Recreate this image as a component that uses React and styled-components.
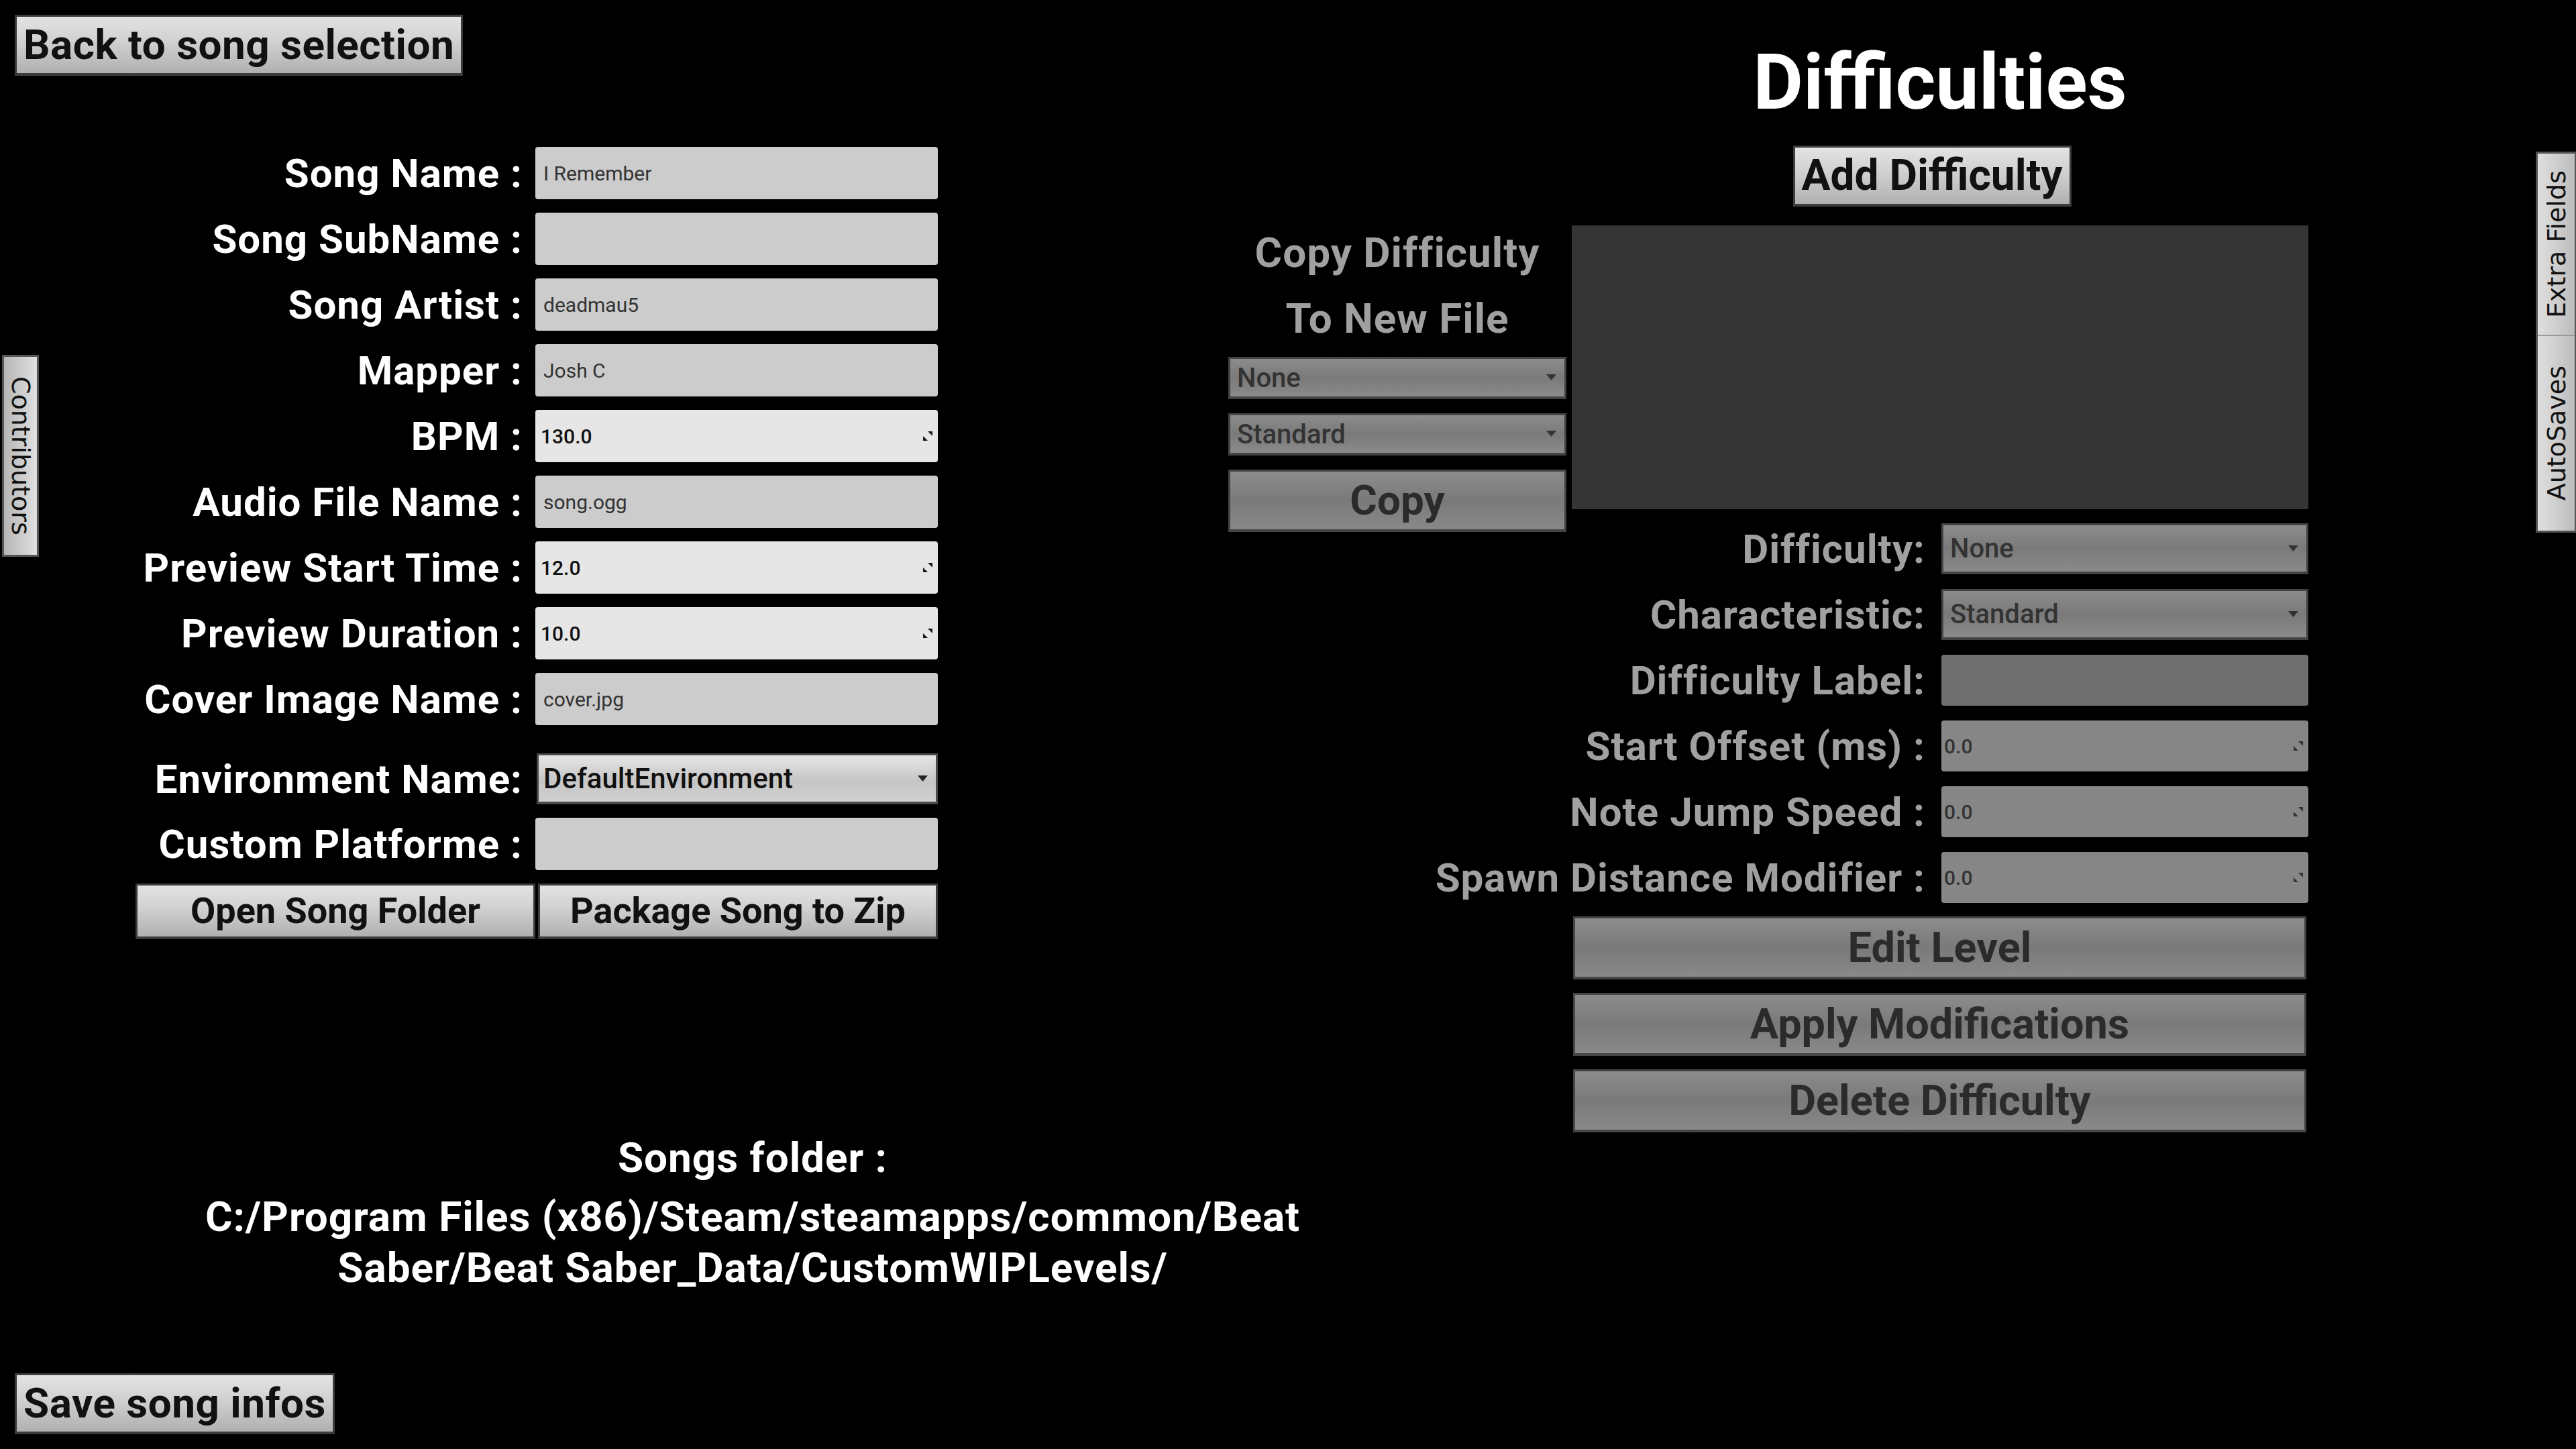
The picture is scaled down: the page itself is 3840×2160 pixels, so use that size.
import React from 'react';
import styled, { createGlobalStyle, css } from 'styled-components';

const GlobalStyle = createGlobalStyle`
  html, body {
    margin: 0;
    padding: 0;
    background: #000;
  }
  body {
    font-family: Roboto, "Liberation Sans", sans-serif;
  }
  * {
    box-sizing: border-box;
  }
`;

const Screen = styled.div`
  position: relative;
  width: 3840px;
  height: 2160px;
  overflow: hidden;
  background: #000;
  display: grid;
  grid-template-columns: 1831px 1610px 1fr;
`;

/* ---------- shared controls ---------- */

const buttonTones = {
  light: css`
    color: #111;
    background: linear-gradient(#e3e3e3, #d0d0d0 45%, #b0b0b0);
    border-color: #3c3c3c;
  `,
  dim: css`
    color: #2b2b2b;
    background: linear-gradient(#8c8c8c, #7a7a7a 50%, #898989);
    border-color: #454545;
  `,
};

const Button = styled.button`
  height: ${p => p.$h}px;
  padding: 0 10px;
  border: 3px solid;
  border-bottom-width: 4px;
  font-family: Roboto, sans-serif;
  font-weight: 700;
  font-size: ${p => p.$fs}px;
  letter-spacing: ${p => p.$ls || 0}px;
  line-height: 1;
  white-space: nowrap;
  ${p => buttonTones[p.$tone || 'light']}
`;

const fieldTones = {
  text: css`
    background: #cccccc;
    color: #333;
    font-weight: 400;
  `,
  number: css`
    background: #e6e6e6;
    color: #111;
    font-weight: 500;
  `,
  dimText: css`
    background: #6f6f6f;
    color: #333;
  `,
  dimNumber: css`
    background: #868686;
    color: #333;
    font-weight: 500;
  `,
};

const Field = styled.div`
  height: ${p => p.$h}px;
  display: flex;
  align-items: center;
  justify-content: space-between;
  padding: 0 6px 0 ${p => p.$pl}px;
  border-radius: 4px;
  font-size: 30px;
  white-space: nowrap;
  ${p => fieldTones[p.$tone]}
`;

const dropTones = {
  light: css`
    background: linear-gradient(#e6e6e6, #c6c6c6 55%, #d0d0d0);
    border-color: #4a4a4a;
    color: #111;
  `,
  dim: css`
    background: linear-gradient(#8c8c8c, #7a7a7a 50%, #8a8a8a);
    border-color: #444;
    color: #333;
  `,
};

const Dropdown = styled.div`
  height: ${p => p.$h}px;
  display: flex;
  align-items: center;
  justify-content: space-between;
  padding: 0 12px 0 ${p => p.$pl}px;
  border: 3px solid;
  border-bottom-width: 4px;
  font-size: ${p => p.$fs || 40}px;
  font-weight: 500;
  white-space: nowrap;
  ${p => dropTones[p.$tone]}
`;

const Label = styled.span`
  text-align: right;
  font-size: 60px;
  font-weight: 700;
  letter-spacing: 1px;
  white-space: nowrap;
  color: ${p => (p.$dim ? '#a0a0a0' : '#fff')};
`;

const FieldRow = styled.div`
  display: grid;
  grid-template-columns: ${p => p.$label}px ${p => p.$field}px;
  column-gap: ${p => p.$gap}px;
  align-items: center;
  margin-top: ${p => p.$push || 0}px;
`;

const SpinIcon = ({ color = '#1a1a1a' }) => (
  <svg width="18" height="18" viewBox="0 0 18 18">
    <path d="M9 2 L16 2 L16 9 Z" fill={color} />
    <path d="M2 9 L2 16 L9 16 Z" fill={color} />
  </svg>
);

const Caret = ({ color = '#222' }) => (
  <svg width="15" height="10" viewBox="0 0 15 10">
    <path d="M0 0 L15 0 L7.5 9 Z" fill={color} />
  </svg>
);

/* ---------- left pane ---------- */

const LeftPane = styled.div`
  display: flex;
  flex-direction: column;
  align-items: flex-start;
  padding: 22px;
`;

const SongForm = styled.div`
  margin: 106px 0 0 178px;
  width: 1198px;
  display: flex;
  flex-direction: column;
  gap: 20px;
`;

const FolderButtons = styled.div`
  display: grid;
  grid-template-columns: 596px 596px;
  column-gap: 4px;
  margin-left: 2px;
`;

const FolderInfo = styled.div`
  margin: 289px 0 0 250px;
  width: 1700px;
  text-align: center;
  color: #fff;
  font-weight: 700;
  font-size: 62px;
  letter-spacing: 1px;
  line-height: 73px;
`;

const FolderPath = styled.div`
  margin-top: 14px;
  line-height: 76px;
`;

const SaveButton = styled(Button)`
  margin-top: auto;
`;

/* ---------- right pane ---------- */

const RightPane = styled.div`
  display: grid;
  grid-template-columns: 504px 1098px;
  column-gap: 8px;
  align-content: start;
  padding-top: 58px;
`;

const Title = styled.h1`
  grid-column: 2;
  margin: 0;
  text-align: center;
  font-size: 115px;
  line-height: 130px;
  font-weight: 700;
  color: #fff;
`;

const AddButton = styled(Button)`
  grid-column: 2;
  justify-self: center;
  margin: 29px 24px 0 0;
`;

const CopyColumn = styled.div`
  grid-column: 1;
  grid-row: 3 / span 2;
  align-self: start;
  margin-top: 20px;
  display: flex;
  flex-direction: column;
  gap: 21px;
`;

const CopyCaption = styled.div`
  margin-bottom: -13px;
  text-align: center;
  color: #a0a0a0;
  font-size: 62px;
  font-weight: 700;
  letter-spacing: 1px;
  line-height: 98px;
`;

const DifficultyList = styled.div`
  grid-column: 2;
  grid-row: 3;
  margin-top: 28px;
  height: 423px;
  background: #353535;
`;

const DifficultyForm = styled.div`
  grid-column: 1 / -1;
  grid-row: 4;
  margin-top: 21px;
  display: flex;
  flex-direction: column;
  gap: 22px;
`;

const Actions = styled.div`
  grid-column: 2;
  grid-row: 5;
  margin: 20px 3px 0 2px;
  display: flex;
  flex-direction: column;
  gap: 20px;
`;

/* ---------- side tabs ---------- */

const TabText = styled.span`
  writing-mode: vertical-rl;
  font-family: "DejaVu Sans", sans-serif;
  font-size: 38px;
  color: #111;
  ${p => p.$up && 'transform: rotate(180deg);'}
`;

const LeftTab = styled.div`
  position: absolute;
  left: 3px;
  top: 529px;
  width: 55px;
  height: 301px;
  display: flex;
  align-items: center;
  justify-content: center;
  border: 3px solid #555;
  background: linear-gradient(to right, #b6b6b6, #e0e0e0);
`;

const RightTabs = styled.div`
  position: absolute;
  right: 0;
  top: 226px;
  width: 60px;
  display: flex;
  flex-direction: column;
  border: 3px solid #555;
  border-right-width: 2px;
  background: linear-gradient(to right, #e0e0e0, #bcbcbc);
`;

const RightTab = styled.div`
  height: ${p => p.$h}px;
  display: flex;
  align-items: center;
  justify-content: center;
  & + & {
    border-top: 2px solid #9a9a9a;
  }
`;

/* ---------- data ---------- */

const songFields = [
  { label: 'Song Name :', value: 'I Remember', kind: 'text' },
  { label: 'Song SubName :', value: '', kind: 'text' },
  { label: 'Song Artist :', value: 'deadmau5', kind: 'text' },
  { label: 'Mapper :', value: 'Josh C', kind: 'text' },
  { label: 'BPM :', value: '130.0', kind: 'number' },
  { label: 'Audio File Name :', value: 'song.ogg', kind: 'text' },
  { label: 'Preview Start Time :', value: '12.0', kind: 'number' },
  { label: 'Preview Duration :', value: '10.0', kind: 'number' },
  { label: 'Cover Image Name :', value: 'cover.jpg', kind: 'text' },
];

const numberFields = ['Start Offset (ms) :', 'Note Jump Speed :', 'Spawn Distance Modifier :'];

export default function App() {
  return (
    <Screen>
      <GlobalStyle />

      <LeftPane>
        <Button $h={91} $fs={62} $ls={0.5}>Back to song selection</Button>

        <SongForm>
          {songFields.map(f => (
            <FieldRow key={f.label} $label={579} $field={600} $gap={19}>
              <Label>{f.label}</Label>
              <Field $h={78} $tone={f.kind} $pl={f.kind === 'number' ? 8 : 12}>
                <span>{f.value}</span>
                {f.kind === 'number' && <SpinIcon />}
              </Field>
            </FieldRow>
          ))}
          <FieldRow $label={579} $field={598} $gap={21} $push={22}>
            <Label>Environment Name:</Label>
            <Dropdown $h={76} $tone="light" $pl={7} $fs={42}>
              <span>DefaultEnvironment</span>
              <Caret />
            </Dropdown>
          </FieldRow>
          <FieldRow $label={579} $field={600} $gap={19}>
            <Label>Custom Platforme :</Label>
            <Field $h={78} $tone="text" $pl={12} />
          </FieldRow>
          <FolderButtons>
            <Button $h={83} $fs={54}>Open Song Folder</Button>
            <Button $h={83} $fs={54}>Package Song to Zip</Button>
          </FolderButtons>
        </SongForm>

        <FolderInfo>
          <div>Songs folder :</div>
          <FolderPath>
            C:/Program Files (x86)/Steam/steamapps/common/Beat
            <br />
            Saber/Beat Saber_Data/CustomWIPLevels/
          </FolderPath>
        </FolderInfo>

        <SaveButton $h={91} $fs={62} $ls={0.5}>Save song infos</SaveButton>
      </LeftPane>

      <RightPane>
        <Title>Difficulties</Title>
        <AddButton $h={91} $fs={64}>Add Difficulty</AddButton>

        <CopyColumn>
          <CopyCaption>
            Copy Difficulty
            <br />
            To New File
          </CopyCaption>
          <Dropdown $h={63} $tone="dim" $pl={10}>
            <span>None</span>
            <Caret color="#333" />
          </Dropdown>
          <Dropdown $h={63} $tone="dim" $pl={10}>
            <span>Standard</span>
            <Caret color="#333" />
          </Dropdown>
          <Button $h={93} $fs={62} $tone="dim">Copy</Button>
        </CopyColumn>

        <DifficultyList />

        <DifficultyForm>
          <FieldRow $label={1039} $field={547} $gap={24}>
            <Label $dim>Difficulty:</Label>
            <Dropdown $h={76} $tone="dim" $pl={10}>
              <span>None</span>
              <Caret color="#333" />
            </Dropdown>
          </FieldRow>
          <FieldRow $label={1039} $field={547} $gap={24}>
            <Label $dim>Characteristic:</Label>
            <Dropdown $h={76} $tone="dim" $pl={10}>
              <span>Standard</span>
              <Caret color="#333" />
            </Dropdown>
          </FieldRow>
          <FieldRow $label={1039} $field={547} $gap={24}>
            <Label $dim>Difficulty Label:</Label>
            <Field $h={76} $tone="dimText" $pl={12} />
          </FieldRow>
          {numberFields.map(label => (
            <FieldRow key={label} $label={1039} $field={547} $gap={24}>
              <Label $dim>{label}</Label>
              <Field $h={76} $tone="dimNumber" $pl={4}>
                <span>0.0</span>
                <SpinIcon color="#333" />
              </Field>
            </FieldRow>
          ))}
        </DifficultyForm>

        <Actions>
          <Button $h={94} $fs={63} $tone="dim">Edit Level</Button>
          <Button $h={94} $fs={63} $tone="dim">Apply Modifications</Button>
          <Button $h={94} $fs={63} $tone="dim">Delete Difficulty</Button>
        </Actions>
      </RightPane>

      <LeftTab>
        <TabText>Contributors</TabText>
      </LeftTab>

      <RightTabs>
        <RightTab $h={270}>
          <TabText $up>Extra Fields</TabText>
        </RightTab>
        <RightTab $h={292}>
          <TabText $up>AutoSaves</TabText>
        </RightTab>
      </RightTabs>
    </Screen>
  );
}
